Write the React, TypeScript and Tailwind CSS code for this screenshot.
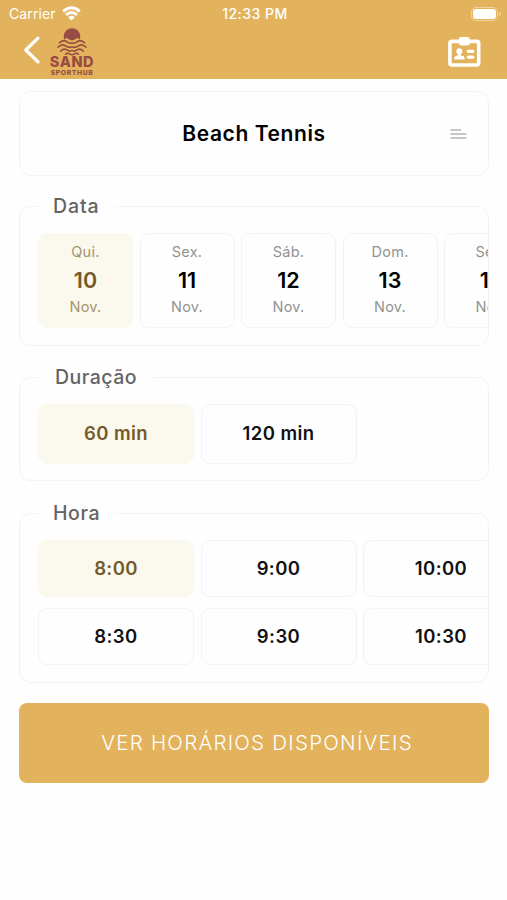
import React from "react";

type Day = { week: string; day: string; selected?: boolean };

const days: Day[] = [
  { week: "Qui.", day: "10", selected: true },
  { week: "Sex.", day: "11" },
  { week: "Sáb.", day: "12" },
  { week: "Dom.", day: "13" },
  { week: "Seg.", day: "14" },
];

const hours = [
  ["8:00", "9:00", "10:00"],
  ["8:30", "9:30", "10:30"],
];

function WifiIcon() {
  return (
    <svg width="19" height="15" viewBox="0 0 19 15" fill="none" stroke="#fff" strokeWidth="2.8">
      <path d="M1.2 5.4Q9.5 -2 17.8 5.4" />
      <path d="M4 8.9Q9.5 4 15 8.9" />
      <path d="M6.2 11.2Q9.5 8.4 12.8 11.2L9.5 14.5Z" fill="#fff" stroke="none" />
    </svg>
  );
}

function Logo() {
  return (
    <div className="flex w-[44px] flex-col items-center text-[#984c43]">
      <svg width="32" height="28" viewBox="0 0 32 28" fill="none" stroke="currentColor" strokeWidth="1.6" strokeLinejoin="round" strokeLinecap="round">
        <path d="M8.2 11.4A8.3 8.3 0 1 1 23.8 11.4Q22.2 9.9 20.6 10.3Q18.4 12.4 16 12.4Q13.6 12.4 11.4 10.3Q9.8 9.9 8.2 11.4Z" fill="currentColor" stroke="none" />
        <path d="M3.4 14.8Q7.4 11.4 10.4 13.4Q13.2 16 16 15Q18.8 16 21.6 13.4Q24.6 11.4 28.6 14.8" />
        <path d="M2 19.2Q6 15.4 9.6 17.8Q13 20.4 16 18.6Q19 20.4 22.4 17.8Q26 15.4 30 19.2" />
        <path d="M4.6 23.2Q7.8 19.8 10.8 21.8Q13.6 24 16 22.4Q18.4 24 21.2 21.8Q24.2 19.8 27.4 23.2" />
        <path d="M9.6 26.2Q11.6 24.6 13.4 25.8Q16 27.6 18.6 25.8Q20.4 24.6 22.4 26.2" />
      </svg>
      <span className="h-[12px] text-[14.5px] leading-[12px] font-extrabold tracking-[0.6px]">SAND</span>
      <span className="mt-[1px] h-[8px] text-[6.8px] leading-[8px] font-extrabold tracking-[0.6px]">SPORTHUB</span>
    </div>
  );
}

function BadgeIcon() {
  return (
    <svg width="33" height="31" viewBox="0 0 33 31" fill="none">
      <rect x="1.9" y="4.4" width="28.8" height="23.6" rx="2.2" stroke="#fff" strokeWidth="3.6" />
      <rect x="10.8" y="0" width="11" height="8.5" rx="2.4" fill="#fff" />
      <circle cx="11.3" cy="14.2" r="3" fill="#fff" />
      <path d="M10 16h2.6v2.5q4 .3 4 2.7v1.4H6.2v-1.4q0-2.4 3.8-2.7Z" fill="#fff" />
      <path d="M20.3 14.3h4.6M20.3 20.1h4.6" stroke="#fff" strokeWidth="3.2" strokeLinecap="round" />
    </svg>
  );
}

function Section({ title, titleClass, className, children }: { title: string; titleClass: string; className: string; children: React.ReactNode }) {
  return (
    <section className={`rounded-[12px] border border-[#f3f3f3] bg-[#fefefe] ${className}`}>
      <h2 className={`-mt-[14px] ml-[18px] h-[26px] bg-[#fefefe] text-[19.5px] leading-[26px] font-medium text-[#646464] ${titleClass}`}>{title}</h2>
      <div className="overflow-hidden pl-[18px]">{children}</div>
    </section>
  );
}

function Choice({ label, selected = false, size }: { label: string; selected?: boolean; size: string }) {
  return (
    <button className={`flex w-[156px] shrink-0 items-center justify-center rounded-[9px] border text-[18.5px] font-semibold tracking-[0.4px] ${size} ${selected ? "border-[#fbf8ed] bg-[#fbf8ed] text-[#745a2b]" : "border-[#f3f3f3] text-[#111]"}`}>
      {label}
    </button>
  );
}

export default function App() {
  return (
    <div className="flex h-[900px] w-[507px] flex-col overflow-hidden bg-[#fefefe] font-['Inter','Liberation_Sans',sans-serif]">
      <header className="h-[79px] shrink-0 bg-[#e2b35c] text-white">
        <div className="grid h-[27px] grid-cols-3 items-center pr-[6px] pl-[9px] text-[14px] leading-[27px]">
          <div className="flex items-center gap-[6px]">
            <span className="tracking-[0.1px]">Carrier</span>
            <WifiIcon />
          </div>
          <span className="text-center text-[14px] font-medium tracking-[0.5px]">12:33 PM</span>
          <div className="flex items-center justify-end gap-px">
            <div className="flex h-[14px] w-[27px] items-center justify-center rounded-[5px] border border-[#f0d3a0]">
              <div className="h-[10px] w-[23px] rounded-[3px] bg-white" />
            </div>
            <div className="h-[4px] w-[2px] rounded-r bg-[#f0d3a0]" />
          </div>
        </div>
        <div className="flex h-[52px] items-start pr-[26px] pl-[23px]">
          <svg className="mt-[8px]" width="18" height="30" viewBox="0 0 18 30" fill="none" stroke="#fff" strokeWidth="3.2" strokeLinecap="round" strokeLinejoin="round">
            <path d="M15 3.2L2.8 15L15 26.8" />
          </svg>
          <div className="mt-px ml-[9px]">
            <Logo />
          </div>
          <div className="mt-[10px] ml-auto">
            <BadgeIcon />
          </div>
        </div>
      </header>

      <main className="flex flex-col pt-[12px] pr-[18px] pl-[19px]">
        <div className="grid h-[85px] grid-cols-[40px_1fr_40px] items-center rounded-[12px] border border-[#f3f3f3] bg-[#fefefe]">
          <span />
          <h1 className="text-center text-[21px] font-semibold tracking-[0.6px] text-black">Beach Tennis</h1>
          <svg width="17" height="10" viewBox="0 0 17 10" stroke="#b4b4b4" strokeWidth="1.3" className="mt-px ml-[2px]">
            <path d="M.5 1H11M.5 5H16.5M.5 9H16.5" />
          </svg>
        </div>

        <Section title="Data" titleClass="w-[77px] pl-[15px] tracking-[0.9px]" className="mt-[30px] h-[140px]">
          <div className="mt-[14px] flex w-max gap-[6.5px]">
            {days.map((d) => (
              <button
                key={d.day}
                className={`flex h-[95px] w-[95px] shrink-0 flex-col items-center rounded-[9px] border pt-[6px] ${d.selected ? "border-[#fbf8ed] bg-[#fbf8ed] text-[#a4946f]" : "border-[#f3f3f3] text-[#929292]"}`}
              >
                <span className="text-[14.5px] leading-[24px] tracking-[0.3px]">{d.week}</span>
                <span className={`text-[21.5px] leading-[32px] font-semibold ${d.selected ? "text-[#745a2b]" : "text-black"}`}>{d.day}</span>
                <span className="text-[14.5px] leading-[22px] tracking-[0.2px]">Nov.</span>
              </button>
            ))}
          </div>
        </Section>

        <Section title="Duração" titleClass="w-[115px] pl-[17px] tracking-[0.5px]" className="mt-[31px] h-[104px]">
          <div className="mt-[14px] flex gap-[6.5px]">
            <Choice label="60 min" selected size="h-[60px]" />
            <Choice label="120 min" size="h-[60px]" />
          </div>
        </Section>

        <Section title="Hora" titleClass="w-[77px] pl-[15px] tracking-[0.6px]" className="mt-[32px] h-[170px]">
          <div className="mt-[14px] flex w-max flex-col gap-[11px]">
            {hours.map((row) => (
              <div key={row[0]} className="flex gap-[6.5px]">
                {row.map((h) => (
                  <Choice key={h} label={h} selected={h === "8:00"} size="h-[57px]" />
                ))}
              </div>
            ))}
          </div>
        </Section>

        <button className="mt-[20px] h-[80px] rounded-[8px] bg-[#e2b35c] pl-[6px] text-[20.5px] font-light tracking-[1.25px] text-white">VER HORÁRIOS DISPONÍVEIS</button>
      </main>
    </div>
  );
}
